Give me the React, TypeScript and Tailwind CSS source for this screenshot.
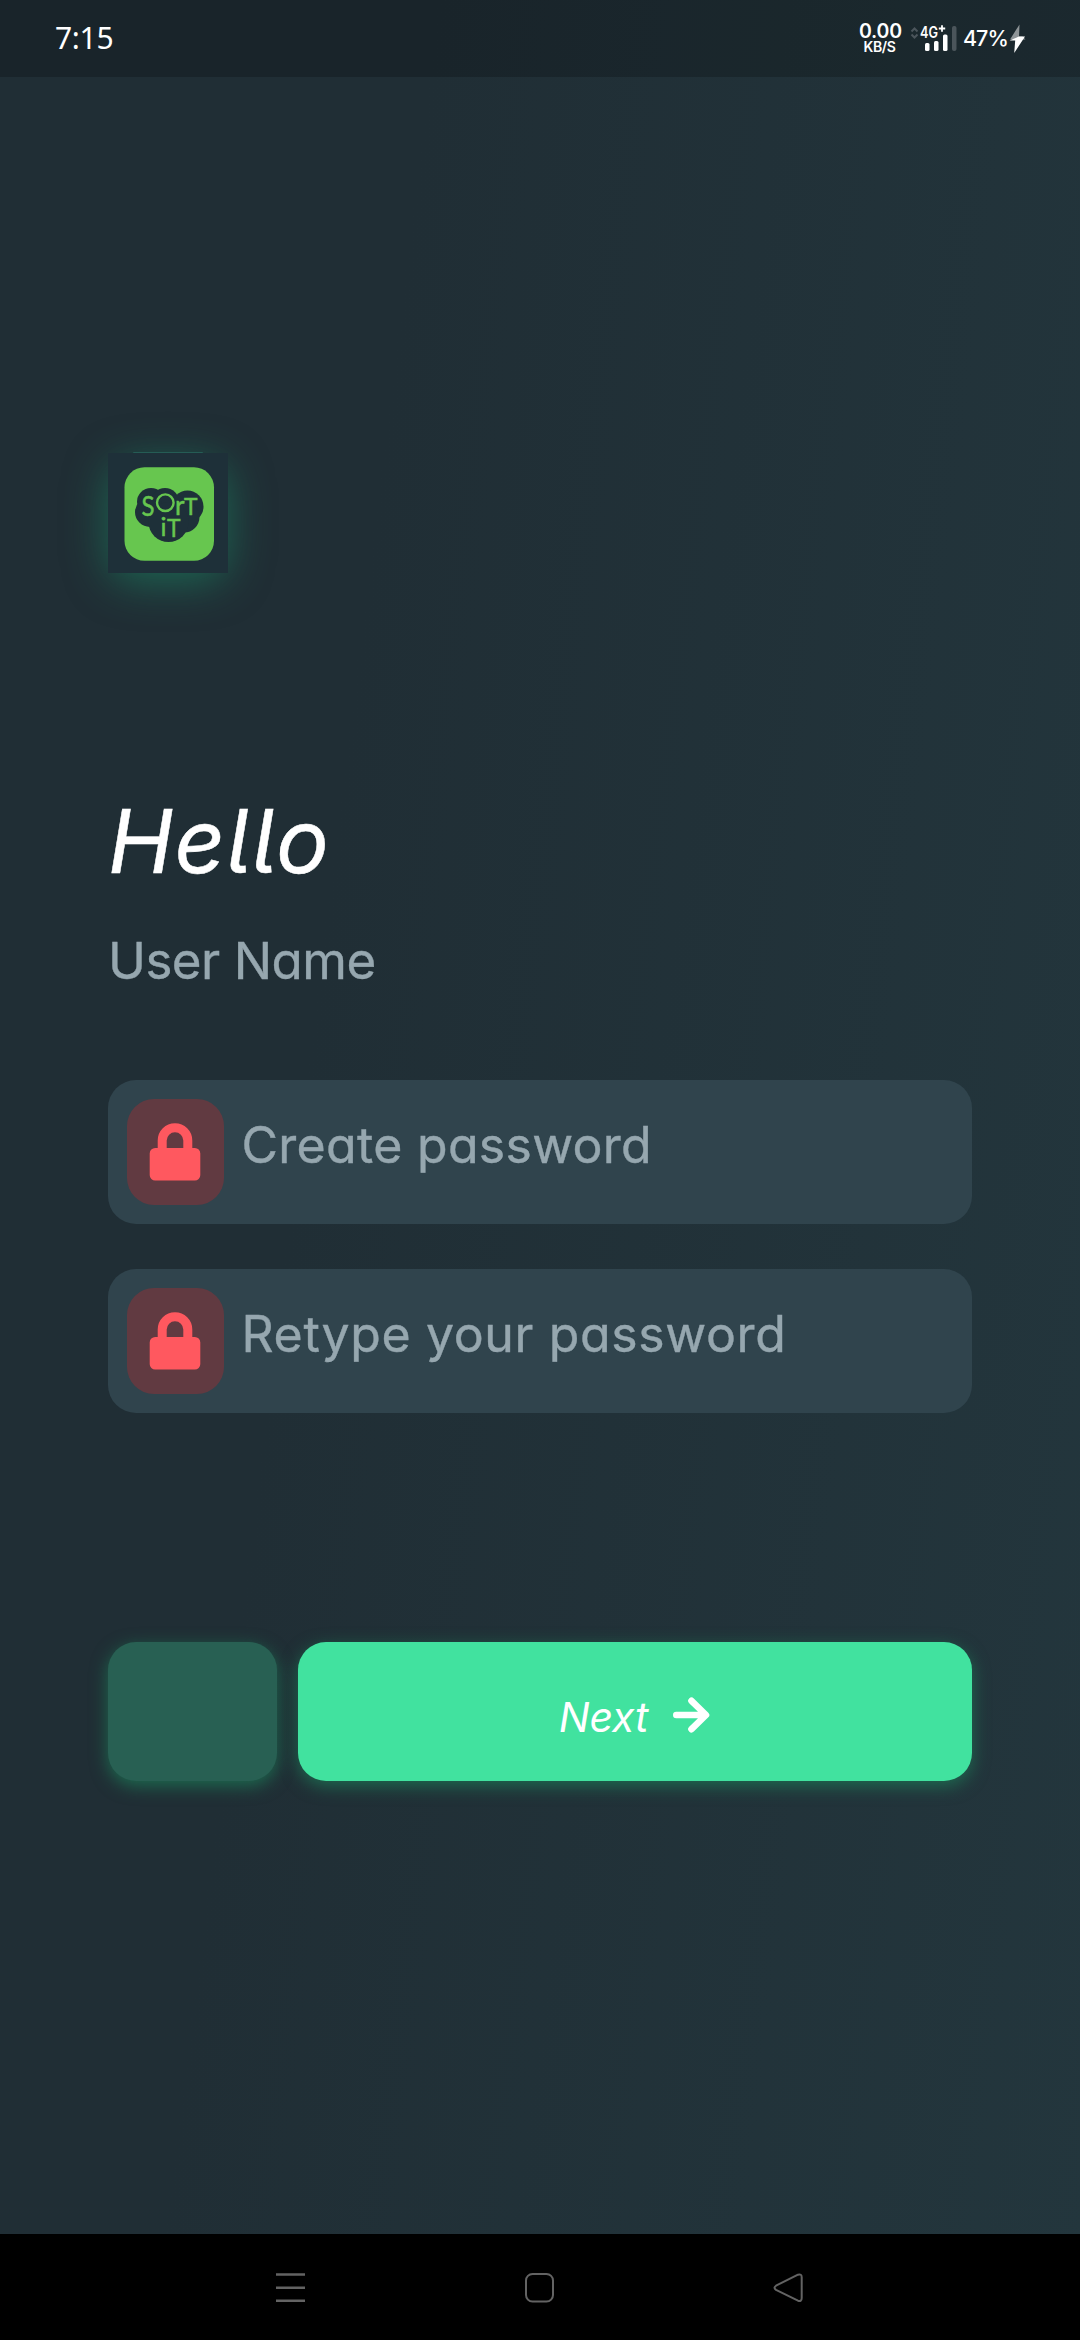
import React from "react";

const humanist = "font-['Inter','Noto_Sans',sans-serif] [font-feature-settings:'cv11','cv05']";

function StatusBar() {
  return (
    <header className="flex h-[77px] shrink-0 items-start bg-black/20 pl-[55px] pr-[54px] font-['Inter',sans-serif] text-white">
      <div className="mt-[17px] font-['Noto_Sans',sans-serif] text-[30px] leading-[42px] tracking-[-0.3px]">7:15</div>
      <div className="ml-auto flex items-start">
        <div className="mt-[22px] w-[41px] text-center font-semibold">
          <div className="text-[19.5px] leading-[18px] tracking-[-0.2px]">0.00</div>
          <div className="text-[14px] leading-[14px] tracking-[-0.4px]">KB/S</div>
        </div>
        <svg className="ml-[10px] mt-[20px]" width="48" height="34" viewBox="909 20 48 34">
          <path d="M910.500 31.500l3-3 3 3M910.500 34.500l3 3 3-3" fill="none" stroke="#4b555b" strokeWidth="2" />
          <text x="919" y="38" fontSize="15.500" fontWeight="600" fill="#fff" textLength="18" lengthAdjust="spacingAndGlyphs" fontFamily="Inter">4G</text>
          <path d="M937.800 28.500h6.400M941 25.300v6.400" stroke="#fff" strokeWidth="1.800" />
          <rect x="924" y="43" width="4.500" height="8" rx="1.500" fill="#fff" />
          <rect x="933" y="41" width="4.500" height="10" rx="1.500" fill="#fff" />
          <rect x="942" y="34.500" width="4.500" height="16.500" rx="1.500" fill="#fff" />
          <rect x="951" y="26" width="4.500" height="25" rx="2" fill="#4b555b" />
        </svg>
        <div className="ml-[5px] mt-[25px] w-[45px] text-[21.500px] font-medium leading-[27px] tracking-[-1px]">47%</div>
        <svg className="mt-[24px]" width="18" height="30" viewBox="1008 24 18 30">
          <path d="M1019.500 24.500L1010 39.500h15.500l-3-3h-3.500z" fill="#8e9497" />
          <path d="M1009.500 40.500h5.700l-1 12.500L1025 36.500h-6z" fill="#fff" />
        </svg>
      </div>
    </header>
  );
}

function Logo() {
  return (
    <div className="h-[120px] w-[120px] rounded-[27px] shadow-[0_9px_42px_1px_rgba(26,135,100,0.6)]">
      <svg width="120" height="120" viewBox="0 0 120 120" className="overflow-visible">
        <rect x="25" y="-1" width="70" height="2" rx="1" fill="#255c55" />
        <rect width="120" height="120" fill="#1e3039" />
        <rect x="16.500" y="14.300" width="89.500" height="93.500" rx="20" fill="#67c64f" />
        <g fill="#1e3039">
          <circle cx="43" cy="49" r="14" />
          <circle cx="57" cy="49" r="14" />
          <circle cx="79.500" cy="53.500" r="16" />
          <circle cx="42" cy="59" r="15" />
          <circle cx="76" cy="64" r="15.500" />
          <circle cx="60.500" cy="69" r="20" />
        </g>
        <g fill="#67c64f" stroke="#67c64f" strokeWidth="0.500" fontFamily="Lato">
          <text x="33.500" y="62.500" fontSize="26" textLength="13" lengthAdjust="spacingAndGlyphs">S</text>
          <circle cx="57.300" cy="49.700" r="8.300" fill="none" strokeWidth="2.400" />
          <text x="67" y="61.500" fontSize="26">r</text>
          <text x="76" y="61.500" fontSize="23.500" textLength="13.500" lengthAdjust="spacingAndGlyphs">T</text>
          <text x="52.500" y="83" fontSize="25">i</text>
          <text x="59" y="84" fontSize="24.500" textLength="13.500" lengthAdjust="spacingAndGlyphs">T</text>
        </g>
      </svg>
    </div>
  );
}

function PasswordField({ label, className }: { label: string; className: string }) {
  return (
    <div className="flex h-[144px] items-center rounded-[28px] bg-[#30444d] pl-[19px]">
      <div className="flex h-[106px] w-[96.500px] shrink-0 items-center justify-center rounded-[27px] bg-[#613a41]">
        <svg width="52" height="58" viewBox="0 0 52 58">
          <path d="M13.200 30V17.500a12.800 12.800 0 0 1 25.600 0V30" fill="none" stroke="#ff585f" strokeWidth="9" />
          <rect x="0.700" y="25" width="50.600" height="32.600" rx="5.500" fill="#ff585f" />
        </svg>
      </div>
      <span className={`mb-[14px] whitespace-nowrap text-[50px] leading-[60px] text-[#96a7af] [-webkit-text-stroke:0.4px_#96a7af] ${humanist} ${className}`}>{label}</span>
    </div>
  );
}

export default function App() {
  return (
    <div className="flex h-[2340px] w-[1080px] flex-col overflow-hidden bg-[linear-gradient(97deg,#202e35_32%,#23363d_100%)]">
      <StatusBar />
      <main className="flex flex-1 flex-col px-[108px] pt-[376px]">
        <Logo />
        <h1 className={`mt-[216px] text-[88px] font-[450] italic leading-[104px] text-white tracking-[1.2px] [-webkit-text-stroke:0.5px_#fff] ${humanist}`}>Hello</h1>
        <p className={`mt-[38px] text-[51px] leading-[60px] tracking-[-0.5px] text-[#96a7af] [-webkit-text-stroke:0.4px_#96a7af] ${humanist}`}>User Name</p>
        <div className="mt-[89px] flex flex-col gap-[45px]">
          <PasswordField label="Create password" className="ml-[18px] tracking-[0.3px]" />
          <PasswordField label="Retype your password" className="ml-[18px] tracking-[0.65px]" />
        </div>
        <div className="mt-[229px] flex gap-[21px]">
          <button aria-label="Back" className="h-[139px] w-[169px] rounded-[28px] bg-[#286053] shadow-[0_5px_17px_rgba(28,125,88,0.75)]" />
          <button className="flex h-[139px] flex-1 items-center justify-center rounded-[28px] bg-[#41e29f] text-white shadow-[0_5px_17px_rgba(28,125,88,0.75)]">
            <span className={`mt-[10px] text-[41px] font-[450] italic leading-[48px] tracking-[-0.2px] ${humanist}`}>Next</span>
            <svg className="ml-[25px] mt-[6px]" width="38" height="38" viewBox="0 0 38 38">
              <path d="M3.300 19H32M18.500 4.800L33 19 18.500 33.200" fill="none" stroke="#fff" strokeWidth="6.600" strokeLinejoin="round" strokeLinecap="round" />
            </svg>
          </button>
        </div>
      </main>
      <nav className="flex h-[106px] shrink-0 items-center justify-between bg-black pl-[275px] pr-[276px]">
        <svg width="31" height="31" viewBox="0 0 31 31" fill="none" stroke="#636363" strokeWidth="2.600">
          <path d="M1 2.500h29M1 15.700h29M1 28.700h29" />
        </svg>
        <svg width="31" height="31" viewBox="0 0 31 31" fill="none" stroke="#636363" strokeWidth="2">
          <rect x="2" y="2" width="27" height="27.500" rx="6.500" />
        </svg>
        <svg width="31" height="31" viewBox="0 0 31 31" fill="none" stroke="#636363" strokeWidth="2" strokeLinejoin="round">
          <path d="M3 13.700L25 2.700Q28.700 1.500 28.700 5.200V26Q28.700 30 25 28.700L3 17.900Q0 15.800 3 13.700Z" />
        </svg>
      </nav>
    </div>
  );
}
